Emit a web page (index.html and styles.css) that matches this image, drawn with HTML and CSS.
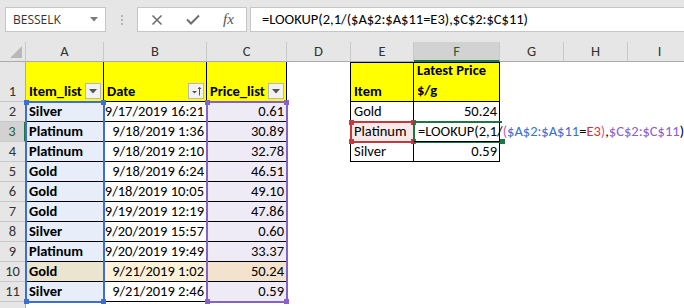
FILE: index.html
```html
<!DOCTYPE html>
<html lang="en">
<head>
    <meta charset="UTF-8">
    <title>LOOKUP latest price</title>
    <link rel="stylesheet" href="styles.css">
</head>
<body>
    <div class="toolbar">
        <div class="namebox">
            <span>BESSELK</span>
            <svg width="8" height="5" viewBox="0 0 8 5"><path d="M0 0h8L4 4.5z" fill="#7a7a7a"/></svg>
        </div>
        <div class="grip"><i></i><i></i><i></i></div>
        <div class="fxbox">
            <svg class="ico" width="12" height="12" viewBox="0 0 12 12"><path d="M1.5 1.5l9 9M10.5 1.5l-9 9" stroke="#6e6e6e" stroke-width="1.6" fill="none"/></svg>
            <svg class="ico" width="14" height="11" viewBox="0 0 14 11"><path d="M1 5.5l4 4L13 1.5" stroke="#6e6e6e" stroke-width="2" fill="none"/></svg>
            <span class="fx">fx</span>
        </div>
        <div class="formula">=LOOKUP(2,1/($A$2:$A$11=E3),$C$2:$C$11)</div>
    </div>

    <div class="sheet">
        <div class="grid">
            <div class="hd corner"><svg width="12" height="12" viewBox="0 0 12 12"><path d="M12 0V12H0z" fill="#b8b8b8"/></svg></div>
            <div class="hd">A</div>
            <div class="hd">B</div>
            <div class="hd">C</div>
            <div class="hd">D</div>
            <div class="hd">E</div>
            <div class="hd sel-col">F</div>
            <div class="hd">G</div>
            <div class="hd">H</div>
            <div class="hd">I</div>

            <div class="rh">1</div>
            <div class="c th tl">Item_list<span class="fbtn"><svg width="8" height="5" viewBox="0 0 8 5"><path d="M0 0h8L4 4.5z" fill="#555"/></svg></span></div>
            <div class="c th tl">Date<span class="fbtn"><svg width="12" height="12" viewBox="0 0 12 12"><path d="M2 6h5L4.5 8.5z" fill="#555"/><path d="M9.5 10.5V2.5M8 4l1.5-1.8L11 4" stroke="#555" stroke-width="1" fill="none"/></svg></span></div>
            <div class="c th tl">Price_list<span class="fbtn"><svg width="8" height="5" viewBox="0 0 8 5"><path d="M0 0h8L4 4.5z" fill="#555"/></svg></span></div>
            <div class="c edge"></div>
            <div class="c th tt">Item</div>
            <div class="c th tt two">Latest Price<br>$/g</div>
            <div class="c"></div>
            <div class="c"></div>
            <div class="c"></div>

            <div class="rh">2</div>
            <div class="c tl ra b">Silver</div>
            <div class="c tl r">9/17/2019 16:21</div>
            <div class="c tl rc r">0.61</div>
            <div class="c edge"></div>
            <div class="c tt">Gold</div>
            <div class="c tt r">50.24</div>
            <div class="c"></div>
            <div class="c"></div>
            <div class="c"></div>

            <div class="rh sel-row">3</div>
            <div class="c tl ra b">Platinum</div>
            <div class="c tl r">9/18/2019 1:36</div>
            <div class="c tl rc r">30.89</div>
            <div class="c edge"></div>
            <div class="c tt re">Platinum</div>
            <div class="c tt edit">=LOOKUP(2,1/<span class="pp">(</span><span class="pa">$A$2:$A$11</span>=<span class="pe">E3</span><span class="pp">)</span>,<span class="pc">$C$2:$C$11</span>)</div>
            <div class="c"></div>
            <div class="c"></div>
            <div class="c"></div>

            <div class="rh">4</div>
            <div class="c tl ra b">Platinum</div>
            <div class="c tl r">9/18/2019 2:10</div>
            <div class="c tl rc r">32.78</div>
            <div class="c edge"></div>
            <div class="c tt">Silver</div>
            <div class="c tt r">0.59</div>
            <div class="c"></div>
            <div class="c"></div>
            <div class="c"></div>

            <div class="rh">5</div>
            <div class="c tl ra b">Gold</div>
            <div class="c tl r">9/18/2019 6:24</div>
            <div class="c tl rc r">46.51</div>
            <div class="c"></div><div class="c"></div><div class="c"></div><div class="c"></div><div class="c"></div><div class="c"></div>

            <div class="rh">6</div>
            <div class="c tl ra b">Gold</div>
            <div class="c tl r">9/18/2019 10:05</div>
            <div class="c tl rc r">49.10</div>
            <div class="c"></div><div class="c"></div><div class="c"></div><div class="c"></div><div class="c"></div><div class="c"></div>

            <div class="rh">7</div>
            <div class="c tl ra b">Gold</div>
            <div class="c tl r">9/19/2019 12:19</div>
            <div class="c tl rc r">47.86</div>
            <div class="c"></div><div class="c"></div><div class="c"></div><div class="c"></div><div class="c"></div><div class="c"></div>

            <div class="rh">8</div>
            <div class="c tl ra b">Silver</div>
            <div class="c tl r">9/20/2019 15:57</div>
            <div class="c tl rc r">0.60</div>
            <div class="c"></div><div class="c"></div><div class="c"></div><div class="c"></div><div class="c"></div><div class="c"></div>

            <div class="rh">9</div>
            <div class="c tl ra b">Platinum</div>
            <div class="c tl r">9/20/2019 19:49</div>
            <div class="c tl rc r">33.37</div>
            <div class="c"></div><div class="c"></div><div class="c"></div><div class="c"></div><div class="c"></div><div class="c"></div>

            <div class="rh">10</div>
            <div class="c tl hl-a b">Gold</div>
            <div class="c tl hl-b r">9/21/2019 1:02</div>
            <div class="c tl hl-c r">50.24</div>
            <div class="c"></div><div class="c"></div><div class="c"></div><div class="c"></div><div class="c"></div><div class="c"></div>

            <div class="rh">11</div>
            <div class="c tl ra b">Silver</div>
            <div class="c tl r">9/21/2019 2:46</div>
            <div class="c tl rc r">0.59</div>
            <div class="c"></div><div class="c"></div><div class="c"></div><div class="c"></div><div class="c"></div><div class="c"></div>

            <div class="rh"></div>
        </div>

        <div class="marks">
            <div class="rng rng-a"><i class="h h1"></i><i class="h h2"></i><i class="h h3"></i><i class="h h4"></i></div>
            <div class="rng rng-c"><i class="h h1"></i><i class="h h2"></i><i class="h h3"></i><i class="h h4"></i></div>
            <div class="rng rng-e"><i class="h h1"></i><i class="h h2"></i><i class="h h3"></i><i class="h h4"></i></div>
            <div class="act"><i class="h h4"></i></div>
        </div>
    </div>
</body>
</html>
```

FILE: styles.css
```css
* {
    margin: 0;
    padding: 0;
    box-sizing: border-box;
}

body {
    width: 684px;
    height: 308px;
    overflow: hidden;
    background: #fff;
    color: #000;
    font-family: Carlito, Lato, "Liberation Sans", sans-serif;
    font-size: 14.5px;
}

/* formula bar */
.toolbar {
    height: 42px;
    background: #e6e6e6;
    display: flex;
    align-items: flex-start;
    padding: 7px 0 0 5px;
}

.namebox {
    width: 101px;
    height: 25px;
    background: #fff;
    border: 1px solid #c6c6c6;
    display: flex;
    align-items: center;
    justify-content: space-between;
    padding: 0 7px 0 7px;
    font-family: "Open Sans", sans-serif;
    font-size: 12px;
    color: #333;
}

.grip {
    width: 31px;
    height: 25px;
    display: flex;
    flex-direction: column;
    align-items: center;
    justify-content: center;
    gap: 2px;
}

.grip i {
    width: 2px;
    height: 2px;
    background: #b4b4b4;
}

.fxbox {
    width: 110px;
    height: 25px;
    background: #fff;
    border: 1px solid #c6c6c6;
    display: flex;
    align-items: center;
    padding-left: 13px;
}

.fxbox .ico {
    margin-right: 23px;
}

.fx {
    font-family: "Liberation Serif", serif;
    font-style: italic;
    font-size: 15px;
    color: #555;
}

.formula {
    flex: 1;
    height: 25px;
    margin-left: 3px;
    background: #fff;
    border: 1px solid #c6c6c6;
    border-right: none;
    padding-left: 11px;
    line-height: 23px;
    white-space: nowrap;
}

/* sheet */
.sheet {
    position: relative;
    height: 266px;
}

.grid,
.marks {
    display: grid;
    grid-template-columns: 26px 78px 103px 80px 64px 63px 86px 64px 64px 64px;
    grid-template-rows: 20px 40px repeat(10, 20px) 20px;
}

.hd {
    background: #e6e6e6;
    border-right: 1px solid #c8c8c8;
    border-bottom: 1px solid #ababab;
    color: #333;
    text-align: center;
    line-height: 19px;
}

.corner {
    display: flex;
    align-items: flex-end;
    justify-content: flex-end;
    padding: 0 3px 3px 0;
}

.sel-col {
    background: #d2d2d2;
    border-bottom: 2px solid #217346;
    color: #1f5e3a;
}

.rh {
    background: #e6e6e6;
    border-right: 1px solid #ababab;
    border-bottom: 1px solid #c8c8c8;
    color: #333;
    display: flex;
    align-items: flex-end;
    justify-content: center;
    padding-bottom: 1px;
    line-height: 18px;
}

.sel-row {
    background: #d2d2d2;
    border-right: 2px solid #217346;
    color: #1f5e3a;
}

.c {
    display: flex;
    align-items: flex-end;
    padding: 0 2px 1px 3px;
    line-height: 18px;
    white-space: nowrap;
}

.tl,
.tt {
    border-right: 1px solid #000;
    border-bottom: 1px solid #000;
}

.th {
    background: #ffff00;
    font-weight: bold;
    position: relative;
}

.grid > .tt.th {
    border-top: 1px solid #000;
}

.edge {
    border-right: 1px solid #000;
}

.two {
    line-height: 20px;
}

.r {
    justify-content: flex-end;
}

.b {
    font-weight: bold;
}

.ra {
    background: #e7eef9;
}

.rc {
    background: #efebf6;
}

.hl-a {
    background: #ebe5d0;
}

.hl-b {
    background: #fdf1d8;
}

.hl-c {
    background: #f3e2cd;
}

.re {
    background: #fae9e9;
}

.edit {
    position: relative;
    z-index: 1;
    overflow: visible;
    padding-left: 4px;
}

.pp {
    color: #c35fa4;
}

.pa {
    color: #3d6fd0;
}

.pe {
    color: #d0333a;
}

.pc {
    color: #8a5fc8;
}

.fbtn {
    position: absolute;
    right: 2px;
    bottom: 2px;
    width: 16px;
    height: 16px;
    border: 1px solid #b8b8b8;
    background: #f2f2f2;
    display: flex;
    align-items: center;
    justify-content: center;
}

/* range outlines over the cells */
.marks {
    position: absolute;
    inset: 0;
    pointer-events: none;
}

.rng {
    position: relative;
    margin: -1px;
    border: 2px solid;
}

.rng-a {
    grid-column: 2;
    grid-row: 3 / 13;
    color: #3d6fd0;
}

.rng-c {
    grid-column: 4;
    grid-row: 3 / 13;
    color: #8462c6;
}

.rng-e {
    grid-column: 6;
    grid-row: 4;
    color: #c4393f;
}

.act {
    grid-column: 7;
    grid-row: 4;
    position: relative;
    margin: -1px -2px -1px -1px;
    border: 2px solid #217346;
    border-right: none;
    color: #217346;
}

.h {
    position: absolute;
    width: 5px;
    height: 5px;
    background: currentColor;
}

.h1 { top: -3px; left: -3px; }
.h2 { top: -3px; right: -3px; }
.h3 { bottom: -3px; left: -3px; }
.h4 { bottom: -3px; right: -3px; }
```
